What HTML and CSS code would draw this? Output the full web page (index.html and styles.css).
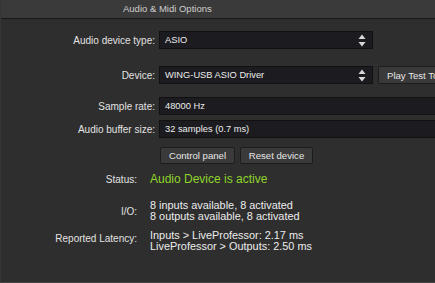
FILE: index.html
```html
<!DOCTYPE html>
<html>
<head>
<title>Audio &amp; Midi Options</title>
<link rel="stylesheet" href="styles.css">
</head>
<body>
<div class="win">
  <div class="titlebar">Audio &amp; Midi Options</div>

  <div class="form">
    <label class="lbl">Audio device type:</label>
    <div class="select short">ASIO
      <svg class="spin" width="8" height="13" viewBox="0 0 8 13"><path d="M4 0.5 L7.5 5 L0.5 5 Z M4 12.5 L7.5 8 L0.5 8 Z" fill="#d8d8d8"/></svg>
    </div>

    <label class="lbl row2">Device:</label>
    <div class="withbtn row2">
      <div class="select short">WING-USB ASIO Driver
        <svg class="spin" width="8" height="13" viewBox="0 0 8 13"><path d="M4 0.5 L7.5 5 L0.5 5 Z M4 12.5 L7.5 8 L0.5 8 Z" fill="#d8d8d8"/></svg>
      </div>
      <button class="btn test">Play Test Tone</button>
    </div>

    <label class="lbl row3">Sample rate:</label>
    <div class="field row3">48000 Hz</div>

    <label class="lbl row4">Audio buffer size:</label>
    <div class="field row4">32 samples (0.7 ms)</div>

    <div class="btns">
      <button class="btn">Control panel</button>
      <button class="btn">Reset device</button>
    </div>
  </div>

  <div class="info">
    <div class="lbl">Status:</div>
    <div class="status">Audio Device is active</div>

    <div class="lbl io">I/O:</div>
    <div class="val io">8 inputs available, 8 activated<br>8 outputs available, 8 activated</div>

    <div class="lbl lat">Reported Latency:</div>
    <div class="val lat">Inputs &gt; LiveProfessor: 2.17 ms<br>LiveProfessor &gt; Outputs: 2.50 ms</div>
  </div>
</div>
</body>
</html>
```

FILE: styles.css
```css
html, body { margin: 0; padding: 0; }
body { background: #2e2e2e; font-family: "Liberation Sans", Arial, sans-serif; overflow: hidden; }

.win { width: 435px; height: 283px; box-sizing: border-box; border-left: 1px solid #363636; border-bottom: 1px solid #444; background: #2e2e2e; overflow: hidden; }

.titlebar { height: 18px; line-height: 17px; background: #3a3a3a; border-bottom: 1px solid #1a1a1a;
  color: #cfcfcf; font-size: 9.5px; padding-left: 122px; }

.form { display: grid; grid-template-columns: 154px 1fr; column-gap: 4px; padding-top: 12px; }
.lbl { color: #e2e2e2; font-size: 10px; text-align: right; align-self: center; }

.select, .field { height: 18px; box-sizing: border-box; background: #1c1c20; border: 1px solid #111;
  color: #ececec; font-size: 9.3px; line-height: 16px; padding-left: 5px; }
.select { position: relative; }
.short { width: 214px; }
.spin { position: absolute; right: 6px; top: 2px; }

.row2 { margin-top: 17px; }
.row3 { margin-top: 13px; }
.row4 { margin-top: 5px; }

.withbtn { display: flex; gap: 5px; }
.withbtn .select { flex: none; }

.btn { height: 17px; box-sizing: border-box; background: #3a3a3a; border: 1px solid #1c1c1c;
  border-radius: 2px; color: #e6e6e6; font-family: inherit; font-size: 9.6px; padding: 0 7px; line-height: 15px; white-space: nowrap; }
.test { flex: none; height: 18px; padding-left: 8px; width: 80px; text-align: left; }

.btns { grid-column: 2; display: flex; gap: 5px; margin-top: 9px; padding-left: 1px; }
.btns .btn:first-child { width: 75px; }
.btns .btn:last-child { width: 73px; }

.info { display: grid; grid-template-columns: 136px 1fr; column-gap: 13px; margin-top: 7px; }
.status { color: #8ed42a; font-size: 12px; line-height: 16px; }
.val { color: #ececec; font-size: 10.9px; line-height: 11px; }
.io { margin-top: 13px; }
.lat { margin-top: 8px; }
.lbl.lat { align-self: start; margin-top: 11px; }
```
